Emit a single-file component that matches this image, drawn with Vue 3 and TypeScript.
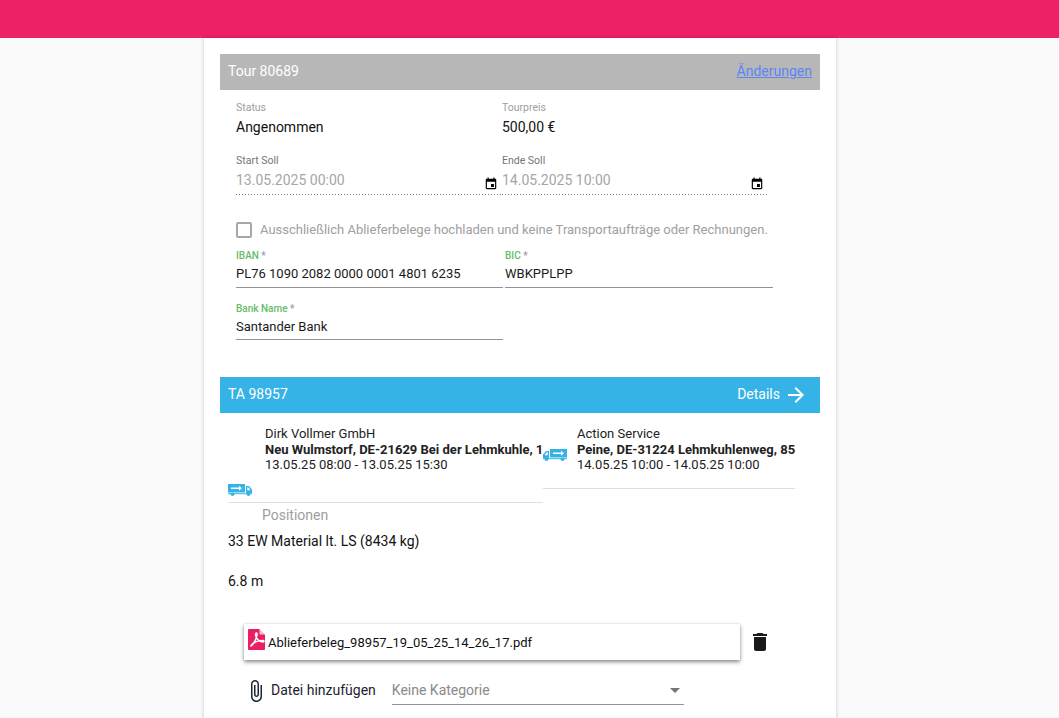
<script setup lang="ts">
const calendar = 'M17 12h-5v5h5v-5zM16 1v2H8V1H6v2H5c-1.11 0-1.99.9-1.99 2L3 19c0 1.1.89 2 2 2h14c1.1 0 2-.9 2-2V5c0-1.1-.9-2-2-2h-1V1h-2zm3 18H5V8h14v11z'
const dates = [
  { label: 'Start Soll', value: '13.05.2025 00:00' },
  { label: 'Ende Soll', value: '14.05.2025 10:00' },
]
</script>

<template>
  <div class="page">
    <header class="topbar"></header>
    <main class="card">
      <div class="head tour-head">
        <span>Tour 80689</span>
        <a class="link" href="#">Änderungen</a>
      </div>

      <section class="tour-body">
        <div class="two">
          <div class="info"><div class="lbl">Status</div><div class="val">Angenommen</div></div>
          <div class="info"><div class="lbl">Tourpreis</div><div class="val">500,00 €</div></div>
        </div>
        <div class="two dates">
          <div v-for="d in dates" :key="d.label" class="date">
            <div class="lbl dark">{{ d.label }}</div>
            <div class="date-val">
              <span>{{ d.value }}</span>
              <svg class="cal" viewBox="0 0 24 24"><path :d="calendar" /></svg>
            </div>
          </div>
        </div>

        <label class="check">
          <span class="box"></span>
          <span class="check-text">Ausschließlich Ablieferbelege hochladen und keine Transportaufträge oder Rechnungen.</span>
        </label>

        <div class="bank">
          <div class="field"><div class="flbl">IBAN <i>*</i></div><div class="fval">PL76 1090 2082 0000 0001 4801 6235</div></div>
          <div class="field"><div class="flbl">BIC <i>*</i></div><div class="fval">WBKPPLPP</div></div>
          <div class="field"><div class="flbl">Bank Name <i>*</i></div><div class="fval">Santander Bank</div></div>
        </div>
      </section>

      <div class="head ta-head">
        <span>TA 98957</span>
        <span class="details">
          Details
          <svg viewBox="0 0 24 24"><path d="M12 4l-1.41 1.41L16.170 11H4v2h12.170l-5.580 5.590L12 20l8-8z" /></svg>
        </span>
      </div>

      <section class="ta-body">
        <div class="stops">
          <div class="stop left">
            <svg class="truck" viewBox="0 0 24 12">
              <path d="M0 0h17v8.500H0z" />
              <path d="M3 3.500h8V1.800l3 2.450-3 2.450V5H3z" fill="#fff" />
              <path fill-rule="evenodd" d="M18 2h3l3 3.500v3.500h-6zM19.300 3.200v3h3.200l-2.200-3z" />
              <path d="M0 9.200h24v1H0z" />
              <circle cx="4.500" cy="10.200" r="1.800" /><circle cx="20.500" cy="10.200" r="1.800" />
            </svg>
            <div class="addr">
              <div>Dirk Vollmer GmbH</div>
              <b>Neu Wulmstorf, DE-21629 Bei der Lehmkuhle, 1</b>
              <div>13.05.25 08:00 - 13.05.25 15:30</div>
            </div>
          </div>
          <div class="stop right">
            <svg class="truck" viewBox="0 0 24 12">
              <path d="M7 0h17v8.500H7z" />
              <path d="M10 3.500h8V1.800l3 2.450-3 2.450V5h-8z" fill="#fff" />
              <path fill-rule="evenodd" d="M6 2H3L0 5.500v3.500h6zM4.700 3.200v3H1.500l2.200-3z" />
              <path d="M0 9.200h24v1H0z" />
              <circle cx="3.500" cy="10.200" r="1.800" /><circle cx="19.500" cy="10.200" r="1.800" />
            </svg>
            <div class="addr">
              <div>Action Service</div>
              <b>Peine, DE-31224 Lehmkuhlenweg, 85</b>
              <div>14.05.25 10:00 - 14.05.25 10:00</div>
            </div>
          </div>
        </div>

        <div class="pos-title">Positionen</div>
        <p class="pos first">33 EW Material lt. LS (8434 kg)</p>
        <p class="pos">6.8 m</p>

        <div class="file-row">
          <div class="file">
            <svg class="pdf" viewBox="0 0 17 21">
              <path d="M1 0h10l6 6v14a1 1 0 0 1-1 1H1a1 1 0 0 1-1-1V1a1 1 0 0 1 1-1z" fill="#e91e63" />
              <path d="M11.500 0v5.500H17z" fill="#f8bbd0" />
              <path d="M3 17C5 16 8 11 9 6C9.500 3.500 7.500 3.500 7.500 5.500C7.500 9 11 13 15 13C16.500 13 16.500 11.500 14.500 11.500C11 11.500 6 13 3.500 16C2.800 17 2.800 17.300 3 17z" fill="none" stroke="#fff" stroke-width="1.500" stroke-linejoin="round" />
            </svg>
            <span>Ablieferbeleg_98957_19_05_25_14_26_17.pdf</span>
          </div>
          <svg class="trash" viewBox="0 0 24 24"><path d="M6 19c0 1.100.9 2 2 2h8c1.100 0 2-.9 2-2V7H6v12zM19 4h-3.500l-1-1h-5l-1 1H5v2h14V4z" /></svg>
        </div>

        <div class="add-row">
          <svg class="clip" viewBox="0 0 24 24"><path d="M16.500 6v11.500c0 2.210-1.790 4-4 4s-4-1.790-4-4V5c0-1.380 1.120-2.500 2.500-2.500s2.500 1.120 2.500 2.500v10.500c0 .55-.45 1-1 1s-1-.45-1-1V6H10v9.500c0 1.380 1.120 2.500 2.500 2.500s2.500-1.120 2.500-2.500V5c0-2.210-1.790-4-4-4S7 2.790 7 5v12.500c0 3.040 2.460 5.500 5.500 5.500s5.500-2.460 5.500-5.500V6h-1.500z" /></svg>
          <span class="add-text">Datei hinzufügen</span>
          <div class="select"><span>Keine Kategorie</span><i class="caret"></i></div>
        </div>
      </section>
    </main>
  </div>
</template>

<style>
html, body { margin: 0; background: #fafafa; overflow: hidden; }
</style>

<style scoped>
.page {
  height: 718px;
  overflow: hidden;
  background: #fafafa;
  font-family: Roboto, "Liberation Sans", sans-serif;
  font-size: 14px;
  color: rgba(0, 0, 0, 0.87);
}
.topbar { height: 38px; background: #ee2066; }
.card {
  width: 600px;
  margin: 0 0 0 204px;
  padding: 16px;
  height: 700px;
  background: #fff;
  box-shadow: 0 0 4px rgba(0, 0, 0, 0.2);
}
.head {
  height: 36px;
  box-sizing: border-box;
  padding: 0 8px 2px;
  display: flex;
  align-items: center;
  justify-content: space-between;
  color: #fff;
}
.tour-head { background: #b7b7b7; }
.ta-head { background: #35b3e6; }
.link { color: #5c85f5; text-decoration: underline; }
.tour-body { padding: 11px 16px 0; height: 287px; box-sizing: border-box; }
.two { display: grid; grid-template-columns: 266px 266px; }
.info { height: 53px; }
.lbl { font-size: 10.5px; line-height: 14px; color: #9e9e9e; }
.lbl.dark { color: #757575; }
.val { margin-top: 2px; line-height: 20px; color: #111; }
.date-val {
  margin-top: 2px;
  height: 25px;
  box-sizing: border-box;
  display: flex;
  justify-content: space-between;
  line-height: 20px;
  color: #a6a6a6;
  padding-right: 4px;
  background: repeating-linear-gradient(to right, #757575 0 1px, transparent 1px 3px) left bottom / 100% 1px no-repeat;
}
.date:last-child { margin-right: 1px; }
.date:last-child .date-val { padding-right: 3px; }
.date-val .cal { width: 14px; height: 14px; margin-top: 7px; }
.cal path { fill: #000; }
.check {
  display: flex;
  align-items: center;
  gap: 8px;
  margin-top: 27px;
  height: 16px;
  font-size: 13px;
  color: #a0a0a0;
  white-space: nowrap;
}
.check-text { margin-bottom: 2px; }
.box {
  width: 12px;
  height: 12px;
  border: 2px solid #a8a8a8;
  border-radius: 2px;
  flex: none;
}
.bank {
  display: grid;
  grid-template-columns: 267px 268px;
  column-gap: 2px;
  row-gap: 15px;
  margin-top: 12px;
}
.field { height: 38px; border-bottom: 1px solid #949494; box-sizing: border-box; }
.field:nth-child(3) { height: 37px; }
.flbl { font-size: 10px; font-weight: 500; line-height: 12px; color: #66bb6a; }
.flbl i { font-style: normal; color: #9e9e9e; }
.fval { margin-top: 2px; line-height: 20px; font-size: 13px; color: #1a1a1a; }
.details { display: flex; align-items: center; gap: 4px; margin-right: 4px; }
.details svg { width: 24px; height: 24px; fill: #fff; margin-top: 2px; }
.ta-body { padding: 0 8px; }
.stops { display: flex; align-items: flex-start; height: 90px; }
.stop { display: flex; box-sizing: border-box; border-bottom: 1px solid #e0e0e0; flex: none; }
.stop.left { width: 315px; height: 90px; align-items: flex-end; padding-bottom: 6px; }
.stop.right { width: 252px; height: 76px; align-items: flex-start; }
.truck { width: 24px; height: 12px; flex: none; fill: #35b3e6; }
.right .truck { margin-top: 36px; }
.addr { font-size: 13px; line-height: 15.5px; white-space: nowrap; color: #222; margin-top: 13px; }
.addr b { display: block; font-weight: 700; }
.left .addr { margin-left: 13px; align-self: flex-start; }
.right .addr { margin-left: 10px; }
.pos-title { margin: 2px 0 0 34px; line-height: 20px; color: #9e9e9e; }
.pos { margin: 0; line-height: 20px; color: #111; }
.pos.first { margin-top: 6px; margin-bottom: 20px; }
.file-row { display: flex; align-items: center; margin: 33px 0 0 16px; }
.file {
  width: 496px;
  height: 36px;
  box-sizing: border-box;
  display: flex;
  align-items: center;
  gap: 3px;
  padding-left: 4px;
  font-size: 13px;
  color: #111;
  background: #fff;
  box-shadow: 0 2px 4px rgba(0, 0, 0, 0.45), 0 0 2px rgba(0, 0, 0, 0.1);
}
.pdf { width: 17px; height: 21px; margin-top: -6px; }
.trash { width: 24px; height: 24px; margin-left: 8px; fill: #1a1a1a; }
.add-row { display: flex; align-items: center; margin: 18px 0 0 16px; height: 24px; }
.clip { width: 24px; height: 24px; fill: #1c2733; margin-top: 2px; }
.add-text { margin-left: 3px; color: #1c2230; }
.select {
  width: 292px;
  height: 26px;
  margin-left: 16px;
  margin-top: 3px;
  padding-bottom: 2px;
  border-bottom: 1px solid #949494;
  box-sizing: border-box;
  display: flex;
  align-items: center;
  justify-content: space-between;
  color: #8a8a8a;
  padding-right: 4px;
}
.caret {
  width: 0;
  height: 0;
  border-left: 5px solid transparent;
  border-right: 5px solid transparent;
  border-top: 5px solid #757575;
}
</style>
